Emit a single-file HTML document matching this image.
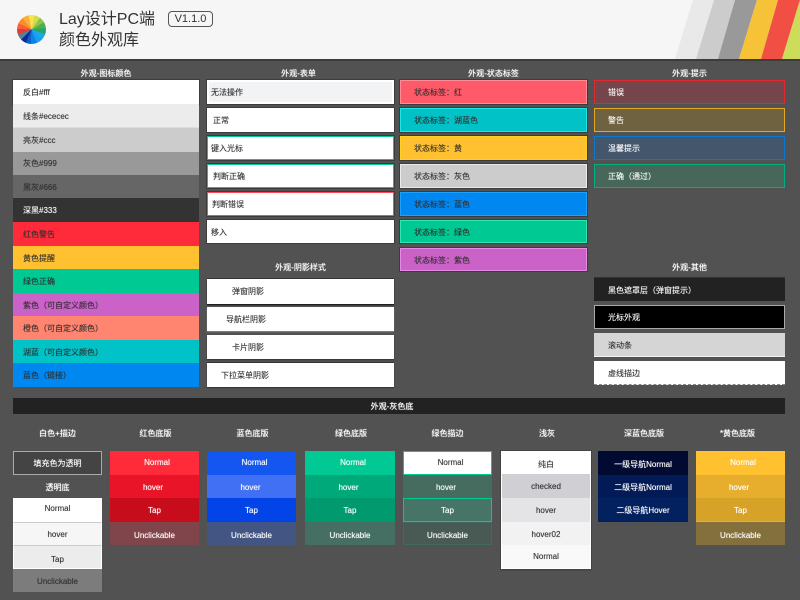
<!DOCTYPE html>
<html lang="zh">
<head>
<meta charset="utf-8">
<title>Lay设计PC端 颜色外观库</title>
<style>
html,body{margin:0;padding:0;width:800px;height:600px;overflow:hidden;background:#525252}
body{position:relative;font-family:"Liberation Sans","Noto Sans CJK SC",sans-serif;font-size:8px;color:#333}
div{position:absolute;box-sizing:border-box;white-space:nowrap}
.t{color:#fff;text-align:center;height:12px;line-height:12px;font-weight:normal;text-shadow:0 0 .8px #fff}
.r{line-height:26px;text-shadow:0 0 .6px rgba(0,0,0,.45)}
.w{color:#fff;text-shadow:0 0 .6px rgba(255,255,255,.6)}
.c{text-align:center;color:#fff;text-shadow:0 0 .7px rgba(255,255,255,.7)}
.k{color:#333;text-shadow:0 0 .6px rgba(0,0,0,.45)}
.e{box-shadow:0 0 0 1px #3c3c3c}
</style>
</head>
<body>
<div style="left:0;top:0;width:800px;height:59px;background:#f6f6f6;overflow:hidden">
<svg width="800" height="59" style="position:absolute;left:0;top:0">
<polygon points="675,59 693,0 714,0 696,59" fill="#e9e9e9"/>
<polygon points="696,59 714,0 735,0 718,59" fill="#cccccc"/>
<polygon points="718,59 735,0 757,0 739,59" fill="#999999"/>
<polygon points="739,59 757,0 778,0 761,59" fill="#f6c338"/>
<polygon points="761,59 778,0 800,0 782,59" fill="#f24f44"/>
<polygon points="782,59 800,0 800,59" fill="#cddc5a"/>
</svg>
</div>
<div style="left:0;top:59px;width:800px;height:2px;background:#3c3c3c"></div>
<div style="left:17px;top:15px;width:29px;height:29px;border-radius:50%;background:conic-gradient(from -12deg,#fbe34f 0 24deg,#d6da4e 24deg 48deg,#8fc24a 48deg 72deg,#4caf50 72deg 96deg,#23a56c 96deg 120deg,#1ca8e0 120deg 145deg,#1b9df0 145deg 170deg,#0a84e6 170deg 195deg,#0d5fc4 195deg 215deg,#0a2a9a 215deg 238deg,#607d8b 238deg 262deg,#e53935 262deg 284deg,#f4613a 284deg 308deg,#fb8c2c 308deg 334deg,#fbb03b 334deg 360deg)"></div>
<div style="left:59px;top:10px;font-size:16px;line-height:20px;color:#333">Lay设计PC端</div>
<div style="left:59px;top:31px;font-size:16px;line-height:20px;color:#333">颜色外观库</div>
<div style="left:168px;top:11px;width:45px;height:16px;border:1px solid #555;border-radius:4px;font-size:11px;line-height:14px;text-align:center;color:#333">V1.1.0</div>

<div class="t" style="left:13px;top:68px;width:186px">外观-图标颜色</div>
<div class="t" style="left:205px;top:68px;width:187px">外观-表单</div>
<div class="t" style="left:400px;top:68px;width:187px">外观-状态标签</div>
<div class="t" style="left:594px;top:68px;width:191px">外观-提示</div>
<div class="t" style="left:207px;top:262px;width:187px">外观-阴影样式</div>
<div class="t" style="left:594px;top:262px;width:191px">外观-其他</div>

<div class="r e" style="left:13px;top:80px;width:186px;height:24px;padding-left:10px;background:#fff;line-height:26px">反白#fff</div>
<div class="r" style="left:13px;top:104px;width:186px;height:24px;padding-left:10px;background:#ececec;border-bottom:1px solid #ddd;line-height:26px">线条#ececec</div>
<div class="r" style="left:13px;top:128px;width:186px;height:24px;padding-left:10px;background:#ccc;line-height:25px">亮灰#ccc</div>
<div class="r" style="left:13px;top:152px;width:186px;height:23px;padding-left:10px;background:#999;line-height:24px">灰色#999</div>
<div class="r" style="left:13px;top:175px;width:186px;height:23px;padding-left:10px;background:#666;line-height:25px">黑灰#666</div>
<div class="r w" style="left:13px;top:198px;width:186px;height:24px;padding-left:10px;background:#333;line-height:26px">深黑#333</div>
<div class="r" style="left:13px;top:222px;width:186px;height:24px;padding-left:10px;background:#ff2b3a;line-height:26px">红色警告</div>
<div class="r" style="left:13px;top:246px;width:186px;height:23px;padding-left:10px;background:#ffc130;line-height:25px">黄色提醒</div>
<div class="r" style="left:13px;top:269px;width:186px;height:24px;padding-left:10px;background:#00c993;line-height:26px">绿色正确</div>
<div class="r" style="left:13px;top:293px;width:186px;height:23px;padding-left:10px;background:#cb62c8;line-height:25px">紫色（可自定义颜色）</div>
<div class="r" style="left:13px;top:316px;width:186px;height:24px;padding-left:10px;background:#ff8570;line-height:26px">橙色（可自定义颜色）</div>
<div class="r" style="left:13px;top:340px;width:186px;height:23px;padding-left:10px;background:#00c2c7;line-height:25px">湖蓝（可自定义颜色）</div>
<div class="r" style="left:13px;top:363px;width:186px;height:24px;padding-left:10px;background:#0087f0;line-height:26px">蓝色（链接）</div>

<div class="r e" style="left:207px;top:80px;width:187px;height:24px;background:#f2f3f5;border:2px solid #fff;line-height:22px;padding-left:2px">无法操作</div>
<div class="r e" style="left:207px;top:108px;width:187px;height:24px;padding-left:6px;background:#fff">正常</div>
<div class="r e" style="left:207px;top:136px;width:187px;height:24px;background:#fff;border:1px solid #00c993;line-height:24px;padding-left:3px">键入光标</div>
<div class="r e" style="left:207px;top:164px;width:187px;height:24px;background:#fff;border:1px solid #00c993;padding-left:5px;line-height:24px">判断正确</div>
<div class="r e" style="left:207px;top:192px;width:187px;height:24px;background:#fff;border:1px solid #ff4b59;padding-left:4px;line-height:24px">判断错误</div>
<div class="r e" style="left:207px;top:220px;width:187px;height:23px;padding-left:4px;background:#fff;line-height:25px">移入</div>

<div class="r" style="left:207px;top:279px;width:187px;height:25px;padding-left:25px;background:#fff;box-shadow:0 -1px 0 #333,0 1px 1px #111;line-height:26px">弹窗阴影</div>
<div class="r" style="left:207px;top:307px;width:187px;height:24px;padding-left:19px;background:#fff;box-shadow:0 1px 1px #888;line-height:26px">导航栏阴影</div>
<div class="r" style="left:207px;top:335px;width:187px;height:24px;padding-left:25px;background:#fff;box-shadow:0 1px 1px #333;line-height:26px">卡片阴影</div>
<div class="r" style="left:207px;top:363px;width:187px;height:24px;padding-left:14px;background:#fff;box-shadow:0 -1px 0 #333,0 1px 1px #333;line-height:26px">下拉菜单阴影</div>

<div class="r e" style="left:400px;top:80px;width:187px;height:24px;padding-left:13px;background:#ff5a6a;border:1px solid #ff8a94;line-height:24px">状态标签：红</div>
<div class="r e" style="left:400px;top:108px;width:187px;height:24px;padding-left:13px;background:#00c2c7;border:1px solid #1ee5ea;line-height:24px">状态标签：湖蓝色</div>
<div class="r e" style="left:400px;top:136px;width:187px;height:24px;padding-left:13px;background:#ffc130;border:1px solid #ffd020;line-height:24px">状态标签：黄</div>
<div class="r e" style="left:400px;top:164px;width:187px;height:24px;padding-left:13px;background:#ccc;border:1px solid #ebebeb;line-height:24px">状态标签：灰色</div>
<div class="r e" style="left:400px;top:192px;width:187px;height:24px;padding-left:13px;background:#0087f0;border:1px solid #1ea0ff;line-height:24px">状态标签：蓝色</div>
<div class="r e" style="left:400px;top:220px;width:187px;height:23px;padding-left:13px;background:#00c993;border:1px solid #2ee8b4;line-height:23px">状态标签：绿色</div>
<div class="r e" style="left:400px;top:248px;width:187px;height:23px;padding-left:13px;background:#cb62c8;border:1px solid #e68ae3;line-height:23px">状态标签：紫色</div>

<div class="r w" style="left:594px;top:80px;width:191px;height:24px;padding-left:13px;background:#74464b;border:1px solid #e3282f;line-height:24px">错误</div>
<div class="r w" style="left:594px;top:108px;width:191px;height:24px;padding-left:13px;background:#6f6240;border:1px solid #e6a820;line-height:24px">警告</div>
<div class="r w" style="left:594px;top:136px;width:191px;height:24px;padding-left:13px;background:#44566c;border:1px solid #0b77d0;line-height:24px">温馨提示</div>
<div class="r w" style="left:594px;top:164px;width:191px;height:24px;padding-left:13px;background:#46675a;border:1px solid #00b083;line-height:24px">正确（通过）</div>

<div class="r w" style="left:594px;top:277px;width:191px;height:24px;padding-left:14px;background:#222;border-top:1px solid #333;line-height:25px">黑色遮罩层（弹窗提示）</div>
<div class="r w" style="left:594px;top:305px;width:191px;height:24px;padding-left:13px;background:#000;border:1px solid #aaa;line-height:24px">光标外观</div>
<div class="r" style="left:594px;top:333px;width:191px;height:24px;padding-left:14px;background:#d5d5d5;border-bottom:1px solid #f2f2f2;line-height:25px">滚动条</div>
<div class="r" style="left:594px;top:361px;width:191px;height:24px;padding-left:14px;background:#fff;border-bottom:1px dashed #888;line-height:25px">虚线描边</div>

<div style="left:13px;top:398px;width:772px;height:16px;background:#222"></div>
<div class="t" style="left:6px;top:401px;width:772px">外观-灰色底</div>

<div class="t" style="left:13px;top:428px;width:89px">白色+描边</div>
<div class="t" style="left:111px;top:428px;width:89px">红色底版</div>
<div class="t" style="left:208px;top:428px;width:89px">蓝色底版</div>
<div class="t" style="left:306px;top:428px;width:90px">绿色底版</div>
<div class="t" style="left:403px;top:428px;width:89px">绿色描边</div>
<div class="t" style="left:502px;top:428px;width:90px">浅灰</div>
<div class="t" style="left:599px;top:428px;width:90px">深蓝色底版</div>
<div class="t" style="left:693px;top:428px;width:89px">*黄色底版</div>

<div class="c" style="left:13px;top:451px;width:89px;height:24px;border:1px solid #aaa;line-height:24px;background:#444">填充色为透明</div>
<div class="t" style="left:13px;top:482px;width:89px">透明底</div>
<div class="c k" style="left:13px;top:498px;width:89px;height:24px;background:#fff;line-height:21px">Normal</div>
<div class="c k" style="left:13px;top:522px;width:89px;height:24px;background:#f6f6f6;border:1px solid #fff;border-top:1px solid #ccc;line-height:23px">hover</div>
<div class="c k" style="left:13px;top:545px;width:89px;height:24px;background:#ececec;border:1px solid #fff;border-top:1px solid #ccc;line-height:28px">Tap</div>
<div class="c k" style="left:13px;top:569px;width:89px;height:23px;background:#7c7c7c;line-height:25px">Unclickable</div>

<div class="c" style="left:110px;top:451px;width:89px;height:24px;background:#ff2b3a;line-height:23px;padding-left:5px">Normal</div>
<div class="c" style="left:110px;top:475px;width:89px;height:23px;background:#ea1428;line-height:26px;padding-right:3px">hover</div>
<div class="c" style="left:110px;top:498px;width:89px;height:24px;background:#c70d1c;line-height:26px">Tap</div>
<div class="c" style="left:110px;top:522px;width:89px;height:23px;background:#7f454a;line-height:27px">Unclickable</div>

<div class="c" style="left:207px;top:451px;width:89px;height:24px;background:#1456f0;line-height:23px;padding-left:6px">Normal</div>
<div class="c" style="left:207px;top:475px;width:89px;height:23px;background:#4270f5;line-height:26px;padding-right:2px">hover</div>
<div class="c" style="left:207px;top:498px;width:89px;height:24px;background:#0344e8;line-height:26px">Tap</div>
<div class="c" style="left:207px;top:522px;width:89px;height:23px;background:#425583;line-height:27px">Unclickable</div>

<div class="c" style="left:305px;top:451px;width:90px;height:24px;background:#00c993;line-height:23px;padding-left:6px">Normal</div>
<div class="c" style="left:305px;top:475px;width:90px;height:23px;background:#00a97a;line-height:26px;padding-right:3px">hover</div>
<div class="c" style="left:305px;top:498px;width:90px;height:24px;background:#009a6e;line-height:26px">Tap</div>
<div class="c" style="left:305px;top:522px;width:90px;height:23px;background:#466f63;line-height:27px">Unclickable</div>

<div class="c k" style="left:403px;top:451px;width:89px;height:24px;background:#fff;border:1px solid #00c993;line-height:21px;padding-left:6px">Normal</div>
<div class="c" style="left:403px;top:475px;width:89px;height:23px;background:#466b5f;line-height:26px;padding-right:3px">hover</div>
<div class="c" style="left:403px;top:498px;width:89px;height:24px;background:#467466;border:1px solid #00c993;line-height:24px">Tap</div>
<div class="c" style="left:403px;top:522px;width:89px;height:23px;background:#495a55;border:1px solid #3f6a5e;line-height:25px">Unclickable</div>

<div style="left:501px;top:451px;width:90px;height:118px;background:#fff;box-shadow:0 0 0 1px #444,0 1px 1px #222"></div>
<div class="c k" style="left:502px;top:451px;width:88px;height:23px;background:#fff;line-height:27px">纯白</div>
<div class="c k" style="left:502px;top:474px;width:88px;height:24px;background:#cfcfd4;line-height:26px">checked</div>
<div class="c k" style="left:502px;top:498px;width:88px;height:24px;background:#e4e4e7;line-height:26px">hover</div>
<div class="c k" style="left:502px;top:522px;width:88px;height:23px;background:#f2f2f3;line-height:26px">hover02</div>
<div class="c k" style="left:502px;top:545px;width:88px;height:23px;background:#f9f9f9;line-height:23px">Normal</div>

<div class="c" style="left:598px;top:451px;width:90px;height:24px;background:#010a30;line-height:27px">一级导航Normal</div>
<div class="c" style="left:598px;top:475px;width:90px;height:23px;background:#021a55;line-height:25px">二级导航Normal</div>
<div class="c" style="left:598px;top:498px;width:90px;height:24px;background:#03215f;line-height:26px">二级导航Hover</div>

<div class="c" style="left:696px;top:451px;width:89px;height:24px;background:#ffc130;line-height:23px;padding-left:5px">Normal</div>
<div class="c" style="left:696px;top:475px;width:89px;height:23px;background:#e6ae2c;line-height:26px;padding-right:3px">hover</div>
<div class="c" style="left:696px;top:498px;width:89px;height:24px;background:#d7a228;line-height:26px;border-bottom:1px solid #f0b020">Tap</div>
<div class="c" style="left:696px;top:522px;width:89px;height:23px;background:#83703c;line-height:27px">Unclickable</div>
</body>
</html>
